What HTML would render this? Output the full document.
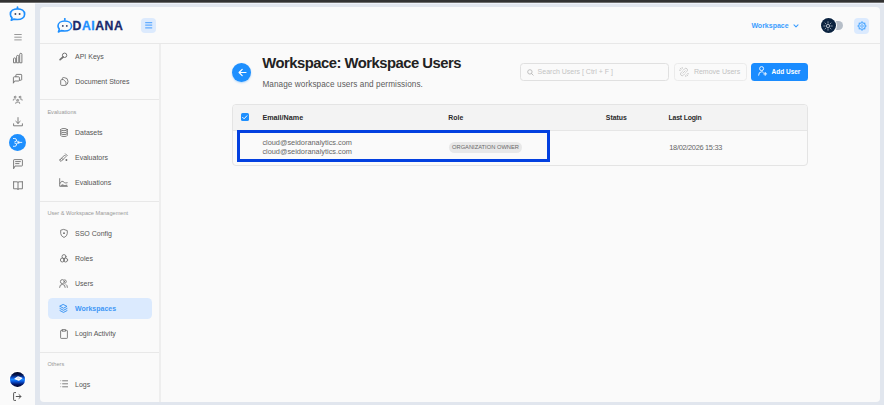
<!DOCTYPE html>
<html><head><meta charset="utf-8">
<style>
*{box-sizing:border-box;margin:0;padding:0}
html,body{width:884px;height:405px;overflow:hidden;background:#e1e6ee;font-family:"Liberation Sans",sans-serif;position:relative}
.a{position:absolute}
.t{position:absolute;white-space:nowrap;line-height:1}
#topbar{left:0;top:0;width:884px;height:2px;background:#323232;box-shadow:0 1px 0 #6e6e6e,0 2px 0 #eef2fa}
#rail{left:0;top:3px;width:35px;height:402px;background:#fafafa;border-top:1px solid #fff}
#panel{left:40px;top:7px;width:840px;height:394.5px;background:#fafafa;border-radius:4px}
#hdrline{left:40px;top:43px;width:840px;height:1px;background:#e8e8e8}
#sideline{left:159px;top:44px;width:2px;height:357.5px;background:#eeeeee}
.hl{position:absolute;left:40px;width:119px;height:1px;background:#e8e8e8}
.nav{font-size:7px;color:#555}
.sec{font-size:5.6px;color:#999}
svg{position:absolute;overflow:visible}
.ic{fill:none;stroke:#737373;stroke-width:0.9;stroke-linecap:round;stroke-linejoin:round}
.ri{fill:none;stroke:#707070;stroke-width:0.9;stroke-linecap:round;stroke-linejoin:round}
</style></head><body>
<div id="topbar" class="a"></div>
<div id="rail" class="a"></div>
<div id="panel" class="a"></div>
<div id="hdrline" class="a"></div>
<div id="sideline" class="a"></div>

<!-- ========== RAIL ICONS ========== -->
<svg style="left:9px;top:5px" width="18" height="17" viewBox="0 0 18 17">
  <line x1="8.5" y1="2" x2="8.5" y2="3.8" stroke="#1e8ffe" stroke-width="1.3"/>
  <circle cx="8.5" cy="2.2" r="0.85" fill="#1e8ffe"/>
  <path d="M4.6 14.2 L2.3 15.2 L3 12.6 C1.9 11.7 1.4 10.5 1.4 9.2 C1.4 5.9 4.6 3.9 8.5 3.9 C12.4 3.9 15.6 5.9 15.6 9.2 C15.6 12.5 12.4 14.5 8.5 14.5 C7 14.5 5.7 14.4 4.6 14.2 Z" fill="none" stroke="#1e8ffe" stroke-width="1.7" stroke-linejoin="round"/>
  <circle cx="6.4" cy="9" r="0.95" fill="#3b4560"/>
  <circle cx="10.6" cy="9" r="0.95" fill="#3b4560"/>
</svg>
<svg style="left:13.5px;top:33.5px" width="8" height="7" viewBox="0 0 8 7">
  <path d="M0.3 0.5H7.7M0.3 3.2H7.7M0.3 5.9H7.7" stroke="#8d8d8d" stroke-width="0.9"/>
</svg>
<!-- bar chart -->
<svg style="left:12.8px;top:53px" width="10" height="10" viewBox="0 0 10 10">
  <path class="ri" d="M0.5 9.4V5.9Q0.5 4.9 1.6 4.9Q2.7 4.9 2.7 5.9V9.4Z M3.6 9.4V3.4Q3.6 2.4 4.7 2.4Q5.8 2.4 5.8 3.4V9.4Z M6.7 9.4V1.3Q6.7 0.3 7.8 0.3Q8.9 0.3 8.9 1.3V9.4Z"/>
</svg>
<!-- chats -->
<svg style="left:13px;top:74.4px" width="9" height="9" viewBox="0 0 9 9">
  <path class="ri" d="M2.9 2.7V1.1Q2.9 0.4 3.6 0.4H8Q8.7 0.4 8.7 1.1V5.5Q8.7 6.2 8 6.2H6.6 M0.4 8.8V3.6Q0.4 2.8 1.2 2.8H5.6Q6.4 2.8 6.4 3.6V6.2Q6.4 7 5.6 7H2Z"/>
</svg>
<!-- people -->
<svg style="left:12.8px;top:95.6px" width="9.4" height="7.6" viewBox="2.4 2.4 19.2 19.2" preserveAspectRatio="none">
  <path d="M10 13a2 2 0 1 0 4 0a2 2 0 0 0 -4 0 M8 21v-1a2 2 0 0 1 2 -2h4a2 2 0 0 1 2 2v1 M15 5a2 2 0 1 0 4 0a2 2 0 0 0 -4 0 M17 10h2a2 2 0 0 1 2 2v1 M5 5a2 2 0 1 0 4 0a2 2 0 0 0 -4 0 M3 13v-1a2 2 0 0 1 2 -2h2" fill="none" stroke="#707070" stroke-width="1.8" stroke-linecap="round" stroke-linejoin="round"/>
</svg>
<!-- download -->
<svg style="left:12.5px;top:116.5px" width="10" height="10" viewBox="0 0 10 10">
  <path class="ri" d="M5 0.6V6.4 M2.8 4.3L5 6.4L7.2 4.3 M0.6 6.8V8.8H9.4V6.8"/>
</svg>
<!-- active circle -->
<div class="a" style="left:9px;top:134px;width:17.2px;height:17.2px;border-radius:50%;background:#1e8ffe"></div>
<svg style="left:13px;top:138.2px" width="10" height="9" viewBox="0 0 10 9">
  <path d="M0.4 0.5H1.8Q3.5 0.5 3.5 2.2Q3.5 3.8 1.8 3.8 M0.4 8.3H1.8Q3.5 8.3 3.5 6.6Q3.5 5 1.8 5 M3.5 2.4Q4.2 4.4 5.4 4.4Q4.2 4.4 3.5 6.4 M5.4 4.4H8.8 M5.8 3.2V5.6" fill="none" stroke="#fff" stroke-width="0.85" stroke-linecap="round" stroke-linejoin="round"/>
</svg>
<!-- message -->
<svg style="left:12.8px;top:158.5px" width="10" height="10" viewBox="0 0 10 10">
  <path class="ri" d="M0.6 9.4V1.2Q0.6 0.6 1.2 0.6H8.8Q9.4 0.6 9.4 1.2V6.4Q9.4 7 8.8 7H2.4Z M2.6 2.6H7.4 M2.6 4.6H6"/>
</svg>
<!-- book -->
<svg style="left:12.6px;top:180.8px" width="10" height="9" viewBox="0 0 10 9">
  <path class="ri" d="M0.6 0.8H4.4Q5 0.8 5 1.4V8.4 M9.4 0.8H5.6Q5 0.8 5 1.4 M0.6 0.8V7.8H4.3Q5 7.8 5 8.4Q5 7.8 5.7 7.8H9.4V0.8"/>
</svg>
<!-- avatar -->
<div class="a" style="left:9.3px;top:371px;width:16.6px;height:16.6px;border-radius:50%;background:#fff"></div>
<div class="a" style="left:10.3px;top:372px;width:14.6px;height:14.6px;border-radius:50%;background:linear-gradient(180deg,#010522 0%,#031450 20%,#0a50d0 38%,#1a86ff 50%,#0a55d8 64%,#04176a 82%,#010522 100%)"></div>
<svg style="left:13.8px;top:375.8px" width="9" height="5" viewBox="0 0 9 5">
  <path d="M0.5 2.6L3.4 0.6Q4 0.2 4.8 0.4L8.2 1.8Q8.7 2.1 8.3 2.5L5.4 4.4Q4.8 4.8 4 4.6L0.7 3.3Q0.2 3 0.5 2.6Z" fill="#f4f8ff"/>
  <path d="M3.2 2.2Q4.4 1.6 5.6 2.6" stroke="#98a8c0" stroke-width="0.6" fill="none"/>
</svg>
<!-- logout -->
<svg style="left:13px;top:391.5px" width="9" height="9" viewBox="0 0 9 9">
  <path d="M2.6 0.6H1.2Q0.6 0.6 0.6 1.2V7.8Q0.6 8.4 1.2 8.4H2.6" fill="none" stroke="#555" stroke-width="1" stroke-linecap="round"/>
  <path d="M3.2 4.5H8 M6 2.6L8 4.5L6 6.4" fill="none" stroke="#555" stroke-width="1" stroke-linecap="round" stroke-linejoin="round"/>
</svg>

<!-- ========== HEADER ========== -->
<svg style="left:56.8px;top:17.8px" width="16" height="15" viewBox="0 0 16 15">
  <line x1="7.8" y1="0.6" x2="7.8" y2="2.8" stroke="#1e8ffe" stroke-width="1.2"/>
  <circle cx="7.8" cy="0.9" r="0.9" fill="#1e8ffe"/>
  <path d="M4.2 12.6 L1.4 14 L2.4 11.1 C1.5 10.2 1 9.2 1 8 C1 5 4 3 7.8 3 C11.6 3 14.6 5 14.6 8 C14.6 11 11.6 13 7.8 13 C6.4 13 5.2 12.8 4.2 12.6 Z" fill="none" stroke="#1e8ffe" stroke-width="1.6" stroke-linejoin="round"/>
  <circle cx="5.8" cy="7.9" r="0.9" fill="#2b3a66"/>
  <circle cx="9.8" cy="7.9" r="0.9" fill="#2b3a66"/>
</svg>
<div class="t" style="left:72.6px;top:19.6px;font-size:12.2px;font-weight:700;letter-spacing:0.55px;color:#1a2a6c;-webkit-text-stroke:0.3px currentColor">D<span style="color:#1e90ff">AI</span>ANA</div>
<div class="a" style="left:140.5px;top:17.6px;width:15.9px;height:15.9px;border-radius:4px;background:#dceafd"></div>
<svg style="left:144.9px;top:22.2px" width="8" height="7" viewBox="0 0 8 7">
  <path d="M0.2 0.7H7.2M0.2 3.2H7.2M0.2 5.9H7.2" stroke="#62acff" stroke-width="1.3"/>
</svg>

<div class="t" style="left:751.4px;top:22px;font-size:7px;font-weight:700;color:#3a9dff">Workspace</div>
<svg style="left:793.3px;top:23.7px" width="6" height="4" viewBox="0 0 6 4">
  <path d="M1 0.9L3 2.8L5 0.9" fill="none" stroke="#3a9dff" stroke-width="1.1" stroke-linecap="round" stroke-linejoin="round"/>
</svg>
<!-- toggle -->
<div class="a" style="left:824px;top:21.1px;width:19.2px;height:9.2px;border-radius:5px;background:#b6bec8"></div>
<div class="a" style="left:819.6px;top:16.9px;width:17.4px;height:17.4px;border-radius:50%;background:#fff"></div>
<div class="a" style="left:820.6px;top:17.9px;width:15.4px;height:15.4px;border-radius:50%;background:#0b2340"></div>
<svg style="left:823.1px;top:20.7px" width="10" height="10" viewBox="0 0 10 10">
  <circle cx="5" cy="5" r="1.6" fill="none" stroke="#b4bdc9" stroke-width="0.95"/>
  <path d="M5 0.7V2.2M5 7.8V9.3M0.7 5H2.2M7.8 5H9.3M2 2L2.9 2.9M7.1 7.1L8 8M2 8L2.9 7.1M7.1 2.9L8 2" stroke="#a6b0bd" stroke-width="0.8" stroke-linecap="round"/>
</svg>
<!-- settings -->
<div class="a" style="left:853.9px;top:17.5px;width:15.2px;height:16px;border-radius:4px;background:#dbeafe"></div>
<svg style="left:856.5px;top:20.5px" width="10" height="10" viewBox="0 0 10 10">
  <circle cx="5" cy="5" r="3.2" fill="none" stroke="#4aa6ff" stroke-width="1.1"/>
  <circle cx="5" cy="5" r="1.3" fill="none" stroke="#4aa6ff" stroke-width="0.8"/>
  <circle cx="5" cy="5" r="0.35" fill="#4aa6ff"/>
  <g fill="#4aa6ff"><circle cx="5" cy="1.1" r="0.75"/><circle cx="5" cy="8.9" r="0.75"/><circle cx="1.1" cy="5" r="0.75"/><circle cx="8.9" cy="5" r="0.75"/><circle cx="2.25" cy="2.25" r="0.7"/><circle cx="7.75" cy="7.75" r="0.7"/><circle cx="2.25" cy="7.75" r="0.7"/><circle cx="7.75" cy="2.25" r="0.7"/></g>
</svg>

<!-- ========== SIDEBAR NAV ========== -->
<svg style="left:59px;top:52px" width="9" height="9" viewBox="0 0 9 9">
  <circle cx="5.6" cy="3.3" r="2.2" fill="none" stroke="#737373" stroke-width="1"/>
  <path d="M4.1 5L1.1 7.6" stroke="#737373" stroke-width="1.7" stroke-linecap="round"/>
</svg>
<div class="t nav" style="left:75px;top:52.6px">API Keys</div>
<svg style="left:59.8px;top:77px" width="9" height="9" viewBox="0 0 9 9">
  <path class="ic" d="M2.4 2.6V1.4Q2.4 0.6 3.2 0.6H4.2Q8 0.6 8 4.4Q8 7.6 6 8.2 M0.7 3.4Q0.7 2.6 1.5 2.6H3.4L6 5.2V7.6Q6 8.4 5.2 8.4H1.5Q0.7 8.4 0.7 7.6Z"/>
</svg>
<div class="t nav" style="left:75.3px;top:78px">Document Stores</div>
<div class="hl" style="top:99px"></div>

<div class="t sec" style="left:47.4px;top:109.8px">Evaluations</div>
<svg style="left:59.5px;top:127.5px" width="8" height="9" viewBox="0 0 8 9">
  <ellipse cx="4" cy="1.6" rx="3.3" ry="1.1" class="ic"/>
  <path class="ic" d="M0.7 1.6V7.4Q0.7 8.5 4 8.5Q7.3 8.5 7.3 7.4V1.6 M0.7 3.6Q0.7 4.7 4 4.7Q7.3 4.7 7.3 3.6 M0.7 5.5Q0.7 6.6 4 6.6Q7.3 6.6 7.3 5.5"/>
</svg>
<div class="t nav" style="left:75px;top:128.6px">Datasets</div>
<svg style="left:59px;top:152.8px" width="9" height="9" viewBox="0 0 9 9">
  <path class="ic" d="M1.1 6.6L5.6 2.1L7 3.5L2.5 8Q1.8 8.6 1.1 8Q0.5 7.3 1.1 6.6Z M6.4 0.8L8.3 2.7 M2.6 5.2L4 6.6"/>
  <circle cx="7.4" cy="7" r="0.95" fill="#6a6a6a"/>
</svg>
<div class="t nav" style="left:75px;top:153.8px">Evaluators</div>
<svg style="left:59px;top:177.8px" width="9" height="9" viewBox="0 0 9 9">
  <path class="ic" d="M0.7 0.6V8.3H8.4 M1 5.4Q2.6 2.2 4 3.4L5.4 4.6Q6.6 5.4 8.2 4.8"/>
  <path d="M1.2 8.2Q2.8 5.6 4.2 6.4Q5.8 7.4 8.2 6.6V8.2Z" fill="#8a8a8a"/>
</svg>
<div class="t nav" style="left:75px;top:178.8px">Evaluations</div>
<div class="hl" style="top:201px"></div>

<div class="t sec" style="left:47.4px;top:210.6px">User &amp; Workspace Management</div>
<svg style="left:59.5px;top:228.5px" width="8" height="9" viewBox="0 0 8 9">
  <path class="ic" d="M4 0.5L7.3 1.6V4.4Q7.3 7 4 8.5Q0.7 7 0.7 4.4V1.6Z"/>
  <circle cx="4" cy="4.2" r="0.9" fill="#6a6a6a"/>
</svg>
<div class="t nav" style="left:75px;top:229.8px">SSO Config</div>
<svg style="left:59.5px;top:253.5px" width="8" height="9" viewBox="0 0 8 9">
  <circle cx="4" cy="2.6" r="2" class="ic"/>
  <circle cx="2.4" cy="6" r="2" class="ic"/>
  <circle cx="5.6" cy="6" r="2" class="ic"/>
</svg>
<div class="t nav" style="left:75px;top:255.4px">Roles</div>
<svg style="left:59px;top:278.5px" width="9" height="9" viewBox="0 0 9 9">
  <circle cx="3.4" cy="2.6" r="2" class="ic"/>
  <path class="ic" d="M0.6 8.4Q0.6 5.4 3.4 5.4Q6.2 5.4 6.2 8.4 M5.8 0.7Q7.3 1 7.3 2.6Q7.3 4 5.8 4.4 M7.2 5.6Q8.4 6.2 8.4 8.4"/>
</svg>
<div class="t nav" style="left:75px;top:279.6px">Users</div>

<div class="a" style="left:47.7px;top:298px;width:104.5px;height:21px;border-radius:4.5px;background:#dbeafe"></div>
<svg style="left:59px;top:303.8px" width="9" height="9" viewBox="0 0 9 9">
  <path d="M4.5 0.6L8 2.4L4.5 4.2L1 2.4Z M1 4.5L4.5 6.3L8 4.5 M1 6.6L4.5 8.4L8 6.6" fill="none" stroke="#2d8cf0" stroke-width="0.9" stroke-linejoin="round" stroke-linecap="round"/>
</svg>
<div class="t" style="left:75px;top:304.8px;font-size:7px;font-weight:700;color:#3f97f6">Workspaces</div>
<svg style="left:59.5px;top:328.5px" width="8" height="10" viewBox="0 0 8 10">
  <path class="ic" d="M2.4 1.4H1.2Q0.6 1.4 0.6 2V8.8Q0.6 9.4 1.2 9.4H6.8Q7.4 9.4 7.4 8.8V2Q7.4 1.4 6.8 1.4H5.6 M2.4 0.6H5.6V2.2H2.4Z"/>
</svg>
<div class="t nav" style="left:75px;top:330px">Login Activity</div>
<div class="hl" style="top:352px"></div>

<div class="t sec" style="left:47.4px;top:361.8px">Others</div>
<svg style="left:59.5px;top:380px" width="8" height="8" viewBox="0 0 8 8">
  <path class="ic" d="M2.6 0.8H7.6M2.6 3.8H7.6M2.6 6.8H7.6"/>
  <circle cx="0.8" cy="0.8" r="0.45" fill="#6a6a6a"/><circle cx="0.8" cy="3.8" r="0.45" fill="#6a6a6a"/><circle cx="0.8" cy="6.8" r="0.45" fill="#6a6a6a"/>
</svg>
<div class="t nav" style="left:75px;top:380.7px">Logs</div>

<!-- ========== CONTENT ========== -->
<div class="a" style="left:232.4px;top:62.6px;width:19px;height:19px;border-radius:50%;background:#1e8ffe;box-shadow:0 1px 2px rgba(30,143,254,.35)"></div>
<svg style="left:237.6px;top:67.8px" width="9" height="9" viewBox="0 0 9 9">
  <path d="M8 4.5H1.2 M4.2 1.4L1.1 4.5L4.2 7.6" fill="none" stroke="#fff" stroke-width="1.2" stroke-linecap="round" stroke-linejoin="round"/>
</svg>
<div class="t" style="left:262.3px;top:56px;font-size:14.8px;font-weight:700;letter-spacing:-0.5px;color:#222">Workspace: Workspace Users</div>
<div class="t" style="left:262.4px;top:80.8px;font-size:8.2px;color:#5a5a5a;letter-spacing:0.08px">Manage workspace users and permissions.</div>

<!-- search -->
<div class="a" style="left:520.4px;top:62.8px;width:148.6px;height:17.8px;border:1px solid #e0e0e0;border-radius:3.5px;background:#fafafa"></div>
<svg style="left:526.8px;top:69px" width="7" height="7" viewBox="0 0 7 7">
  <circle cx="2.9" cy="2.9" r="2.2" fill="none" stroke="#b8b8b8" stroke-width="0.9"/>
  <path d="M4.5 4.5L6.2 6.2" stroke="#b8b8b8" stroke-width="0.9" stroke-linecap="round"/>
</svg>
<div class="t" style="left:537.6px;top:68.2px;font-size:7px;color:#c4c4c4">Search Users [ Ctrl + F ]</div>
<!-- remove users -->
<div class="a" style="left:673.5px;top:63px;width:73.5px;height:17.5px;border:1px solid #ebebeb;border-radius:3.5px;background:#fafafa"></div>
<svg style="left:679.4px;top:66.8px" width="10" height="10" viewBox="0 0 10 10">
  <path d="M4.2 3.2L5.6 1.8Q6.8 0.6 8 1.8Q9.2 3 8 4.2L6.8 5.4 M5.8 6.8L4.4 8.2Q3.2 9.4 2 8.2Q0.8 7 2 5.8L3.2 4.6 M3.8 6.2L6.2 3.8 M1.2 1.2L2.2 2.2 M0.4 3.2H1.6 M3.2 0.4V1.6 M8.8 8.8L7.8 7.8 M9.6 6.8H8.4 M6.8 9.6V8.4" fill="none" stroke="#c4c4c4" stroke-width="0.8" stroke-linecap="round"/>
</svg>
<div class="t" style="left:693.9px;top:68.3px;font-size:7px;color:#c2c2c2">Remove Users</div>
<!-- add user -->
<div class="a" style="left:751px;top:62.8px;width:56.8px;height:18.2px;border-radius:3.5px;background:#1a8cff"></div>
<svg style="left:757.8px;top:66.4px" width="9" height="10" viewBox="0 0 9 10">
  <circle cx="3.6" cy="2.6" r="2" fill="none" stroke="#fff" stroke-width="0.9"/>
  <path d="M0.6 9.2Q0.6 5.8 3.6 5.8Q4.6 5.8 5.2 6.2 M7.2 6.4V9.4 M5.7 7.9H8.7" fill="none" stroke="#fff" stroke-width="0.9" stroke-linecap="round"/>
</svg>
<div class="t" style="left:771.5px;top:69.3px;font-size:6.5px;font-weight:700;color:#fff">Add User</div>

<!-- table card -->
<div class="a" style="left:232.4px;top:104.2px;width:575.6px;height:61.4px;border:1px solid #e4e4e4;border-radius:4px;background:#fafafa;overflow:hidden">
  <div class="a" style="left:0;top:0;width:100%;height:25.8px;background:#f3f3f3;border-bottom:1px solid #e6e6e6"></div>
</div>
<div class="a" style="left:240.6px;top:113.1px;width:8.4px;height:8.4px;border-radius:1.6px;background:#1e8ffe"></div>
<svg style="left:242.2px;top:115px" width="5.5" height="4.5" viewBox="0 0 5.5 4.5">
  <path d="M0.6 2.3L2.1 3.8L4.9 0.8" fill="none" stroke="#fff" stroke-width="0.95" stroke-linecap="round" stroke-linejoin="round"/>
</svg>
<div class="t" style="left:262.4px;top:114.2px;font-size:7.2px;font-weight:700;color:#2a2a2a">Email/Name</div>
<div class="t" style="left:448.3px;top:114.8px;font-size:6.9px;font-weight:700;color:#2a2a2a">Role</div>
<div class="t" style="left:605.8px;top:114.8px;font-size:6.9px;font-weight:700;color:#2a2a2a">Status</div>
<div class="t" style="left:668.6px;top:114.8px;font-size:6.9px;font-weight:700;color:#2a2a2a;letter-spacing:-0.2px">Last Login</div>

<div class="t" style="left:262.4px;top:138.8px;font-size:7.35px;color:#666">cloud@seidoranalytics.com</div>
<div class="t" style="left:262.4px;top:148.2px;font-size:7.35px;color:#666">cloud@seidoranalytics.com</div>
<div class="a" style="left:448.8px;top:142.4px;width:73px;height:10.5px;border-radius:5.5px;background:#e8e8e8"></div>
<div class="t" style="left:452px;top:145.2px;font-size:5.75px;color:#6a6a6a">ORGANIZATION OWNER</div>
<div class="t" style="left:669.3px;top:143.9px;font-size:7.4px;color:#666;letter-spacing:-0.3px">18/02/2026 15:33</div>

<!-- highlight rectangle -->
<div class="a" style="left:237px;top:130.3px;width:313.2px;height:31.4px;border:3px solid #0340e0"></div>
</body></html>
